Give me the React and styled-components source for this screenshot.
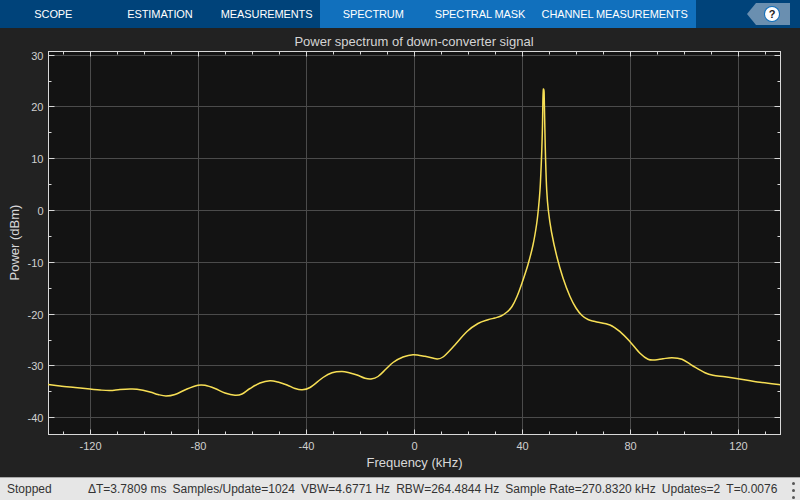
import styled, { createGlobalStyle } from "styled-components";

const GlobalStyle = createGlobalStyle`
  html, body {
    margin: 0;
    padding: 0;
    background: #222222;
  }
  body {
    font-family: "Liberation Sans", Arial, sans-serif;
  }
`;

const Page = styled.div`
  width: 800px;
  height: 500px;
  display: flex;
  flex-direction: column;
  overflow: hidden;
`;

const Toolbar = styled.div`
  height: 28px;
  flex: none;
  display: flex;
  align-items: stretch;
  background: #00437a;
`;

const Tab = styled.div`
  width: ${(p) => p.$width}px;
  display: flex;
  align-items: center;
  justify-content: center;
  font-size: 11px;
  letter-spacing: -0.1px;
  color: #ffffff;
  white-space: nowrap;
  background: ${(p) => (p.$active ? "#1170bd" : "transparent")};
`;

const HelpTag = styled.div`
  margin: 3px 10px 3px auto;
  width: 43px;
  display: flex;
  align-items: center;
  justify-content: flex-end;
  padding-right: 11px;
  box-sizing: border-box;
  background: #6a8fb0;
  clip-path: polygon(0 50%, 9px 0, 100% 0, 100% 100%, 9px 100%);
`;

const HelpButton = styled.div`
  width: 14px;
  height: 14px;
  border-radius: 50%;
  background: #ffffff;
  box-shadow: 0 0 0 1px #1170bd;
  display: flex;
  align-items: center;
  justify-content: center;
  font-size: 11px;
  font-weight: bold;
  color: #222222;
`;

const Figure = styled.div`
  flex: 1;
  display: flex;
  flex-direction: column;
  background: #222222;
`;

const Title = styled.div`
  height: 18px;
  margin-left: 48px;
  width: 732px;
  line-height: 28px;
  text-align: center;
  font-size: 13px;
  color: #d4d4d4;
  white-space: nowrap;
`;

const Chart = styled.svg`
  display: block;
  width: 800px;
  height: 431px;
`;

const TickLabel = styled.text`
  font-family: "Liberation Sans", Arial, sans-serif;
  font-size: 11px;
  fill: #d0d0d0;
`;

const AxisLabel = styled.text`
  font-family: "Liberation Sans", Arial, sans-serif;
  font-size: 13px;
  fill: #d8d8d8;
`;

const StatusBar = styled.div`
  height: 23px;
  flex: none;
  display: flex;
  align-items: center;
  position: relative;
  box-sizing: border-box;
  border-top: 1px solid #a8a8a8;
  padding-bottom: 1px;
  background: #e6e6e6;
  font-size: 12px;
  color: #333333;
  white-space: nowrap;
`;

const StatusState = styled.div`
  width: 88px;
  flex: none;
  padding-left: 7px;
  box-sizing: border-box;
`;

const StatusItems = styled.div`
  display: flex;
  gap: 6.1px;
`;

const Kebab = styled.div`
  position: absolute;
  right: 5px;
  top: 4px;
  display: flex;
  flex-direction: column;
  gap: 4px;
`;

const KebabDot = styled.span`
  width: 3px;
  height: 3px;
  border-radius: 50%;
  background: #555555;
`;

const tabs = [
  { label: "SCOPE", width: 106.67 },
  { label: "ESTIMATION", width: 106.67 },
  { label: "MEASUREMENTS", width: 106.66 },
  { label: "SPECTRUM", width: 106.67, active: true },
  { label: "SPECTRAL MASK", width: 106.67, active: true },
  { label: "CHANNEL MEASUREMENTS", width: 162.66, active: true },
];

const stats = [
  "ΔT=3.7809 ms",
  "Samples/Update=1024",
  "VBW=4.6771 Hz",
  "RBW=264.4844 Hz",
  "Sample Rate=270.8320 kHz",
  "Updates=2",
  "T=0.0076",
];

const LEFT = 48.5;
const RIGHT = 780.5;
const TOP = 51.5;
const BOTTOM = 434.5;

const xOf = (khz) => Math.round(414 + khz * 2.7) + 0.5;
const yOf = (db) => Math.round(210 - db * 5.18) + 0.5;

const xMajor = [-120, -80, -40, 0, 40, 80, 120];
const xMinor = [-130, -110, -100, -90, -70, -60, -50, -30, -20, -10, 10, 20, 30, 50, 60, 70, 90, 100, 110, 130];
const yMajor = [30, 20, 10, 0, -10, -20, -30, -40];
const yMinor = [25, 15, 5, -5, -15, -25, -35];

// traced from the reference, page pixels
const trace = [
  [48, 384.5], [60, 386], [75, 387.5], [90, 389], [100, 390], [110, 390.5], [120, 389.5], [130, 389], [137, 389.3],
  [150, 392], [158, 394.5], [166, 396], [175, 394.5], [187, 389], [198, 385.2], [205, 385.3], [215, 388.5],
  [225, 393], [235, 395.2], [242, 394], [250, 388.5], [260, 383], [270, 380.7], [278, 382], [287, 385],
  [295, 388.5], [302, 389.8], [310, 387.5], [323, 377.5], [332, 372.8], [342, 371.5], [350, 373], [357, 375],
  [365, 378.3], [371, 379], [378, 376.5], [386, 369], [393, 362.5], [403, 357], [413, 354.7], [425, 356.3],
  [437, 359], [443, 357], [453, 347], [467, 331.5], [478, 323.5], [488, 319.7], [495, 318], [501, 316],
  [507, 312], [512, 306.5], [517, 296.5], [522, 283], [528, 264.5], [533, 245], [536.5, 225], [538.5, 208],
  [540, 190], [541, 170], [541.8, 150], [542.5, 125], [542.9, 100], [543.3, 90], [543.7, 89.5], [544.1, 92],
  [544.4, 106], [545, 135], [545.6, 160], [546.7, 190], [548.3, 210], [551.5, 232], [556.7, 256],
  [563, 278], [570, 296.5], [576, 308], [582, 315.5], [588, 319.5], [595, 321.5], [610, 325], [620, 331.7], [630, 341.7],
  [640, 353.3], [648, 359.3], [655, 360], [663, 358.8], [672, 357.7], [682, 359.3], [693, 366], [705, 372.7],
  [713, 375.3], [725, 376.8], [738, 378.7], [760, 382.3], [780, 384.7],
];

// catmull-rom through the traced points
const smoothPath = (pts) => {
  let d = `M${pts[0][0]} ${pts[0][1]}`;
  for (let i = 0; i < pts.length - 1; i++) {
    const p0 = pts[Math.max(i - 1, 0)];
    const p1 = pts[i];
    const p2 = pts[i + 1];
    const p3 = pts[Math.min(i + 2, pts.length - 1)];
    const c1x = p1[0] + (p2[0] - p0[0]) / 6;
    const c1y = p1[1] + (p2[1] - p0[1]) / 6;
    const c2x = p2[0] - (p3[0] - p1[0]) / 6;
    const c2y = p2[1] - (p3[1] - p1[1]) / 6;
    d += `C${c1x.toFixed(2)} ${c1y.toFixed(2)} ${c2x.toFixed(2)} ${c2y.toFixed(2)} ${p2[0]} ${p2[1]}`;
  }
  return d;
};

function SpectrumChart() {
  return (
    <Chart viewBox="0 46 800 431">
      <rect x={LEFT} y={TOP} width={RIGHT - LEFT} height={BOTTOM - TOP} fill="#131313" />
      <g stroke="#4b4b4b" strokeWidth="1">
        {xMajor.map((v) => (
          <line key={v} x1={xOf(v)} x2={xOf(v)} y1={TOP} y2={BOTTOM} />
        ))}
        {yMajor.map((v) => (
          <line key={v} x1={LEFT} x2={RIGHT} y1={yOf(v)} y2={yOf(v)} />
        ))}
      </g>
      <g stroke="#d8d8d8" strokeWidth="1">
        {xMajor.map((v) => (
          <g key={v}>
            <line x1={xOf(v)} x2={xOf(v)} y1={TOP} y2={TOP + 5} />
            <line x1={xOf(v)} x2={xOf(v)} y1={BOTTOM} y2={BOTTOM - 5} />
          </g>
        ))}
        {xMinor.map((v) => (
          <g key={v}>
            <line x1={xOf(v)} x2={xOf(v)} y1={TOP} y2={TOP + 3} />
            <line x1={xOf(v)} x2={xOf(v)} y1={BOTTOM} y2={BOTTOM - 3} />
          </g>
        ))}
        {yMajor.map((v) => (
          <g key={v}>
            <line x1={LEFT} x2={LEFT + 6} y1={yOf(v)} y2={yOf(v)} />
            <line x1={RIGHT} x2={RIGHT - 6} y1={yOf(v)} y2={yOf(v)} />
          </g>
        ))}
        {yMinor.map((v) => (
          <g key={v}>
            <line x1={LEFT} x2={LEFT + 3} y1={yOf(v)} y2={yOf(v)} />
            <line x1={RIGHT} x2={RIGHT - 3} y1={yOf(v)} y2={yOf(v)} />
          </g>
        ))}
        <rect x={LEFT} y={TOP} width={RIGHT - LEFT} height={BOTTOM - TOP} fill="none" />
      </g>
      <path d={smoothPath(trace)} fill="none" stroke="#f7df55" strokeWidth="1.5" strokeLinejoin="round" />
      {yMajor.map((v) => (
        <TickLabel key={v} x={43.5} y={yOf(v) + 4} textAnchor="end">
          {v}
        </TickLabel>
      ))}
      {xMajor.map((v) => (
        <TickLabel key={v} x={xOf(v)} y={449.5} textAnchor="middle">
          {v}
        </TickLabel>
      ))}
      <AxisLabel x={414.5} y={467} textAnchor="middle">
        Frequency (kHz)
      </AxisLabel>
      <AxisLabel x={0} y={0} textAnchor="middle" transform="translate(18.5 242.5) rotate(-90)">
        Power (dBm)
      </AxisLabel>
    </Chart>
  );
}

export default function App() {
  return (
    <Page>
      <GlobalStyle />
      <Toolbar>
        {tabs.map((t) => (
          <Tab key={t.label} $width={t.width} $active={t.active}>
            {t.label}
          </Tab>
        ))}
        <HelpTag>
          <HelpButton>?</HelpButton>
        </HelpTag>
      </Toolbar>
      <Figure>
        <Title>Power spectrum of down-converter signal</Title>
        <SpectrumChart />
      </Figure>
      <StatusBar>
        <StatusState>Stopped</StatusState>
        <StatusItems>
          {stats.map((s) => (
            <span key={s}>{s}</span>
          ))}
        </StatusItems>
        <Kebab>
          <KebabDot />
          <KebabDot />
          <KebabDot />
        </Kebab>
      </StatusBar>
    </Page>
  );
}
